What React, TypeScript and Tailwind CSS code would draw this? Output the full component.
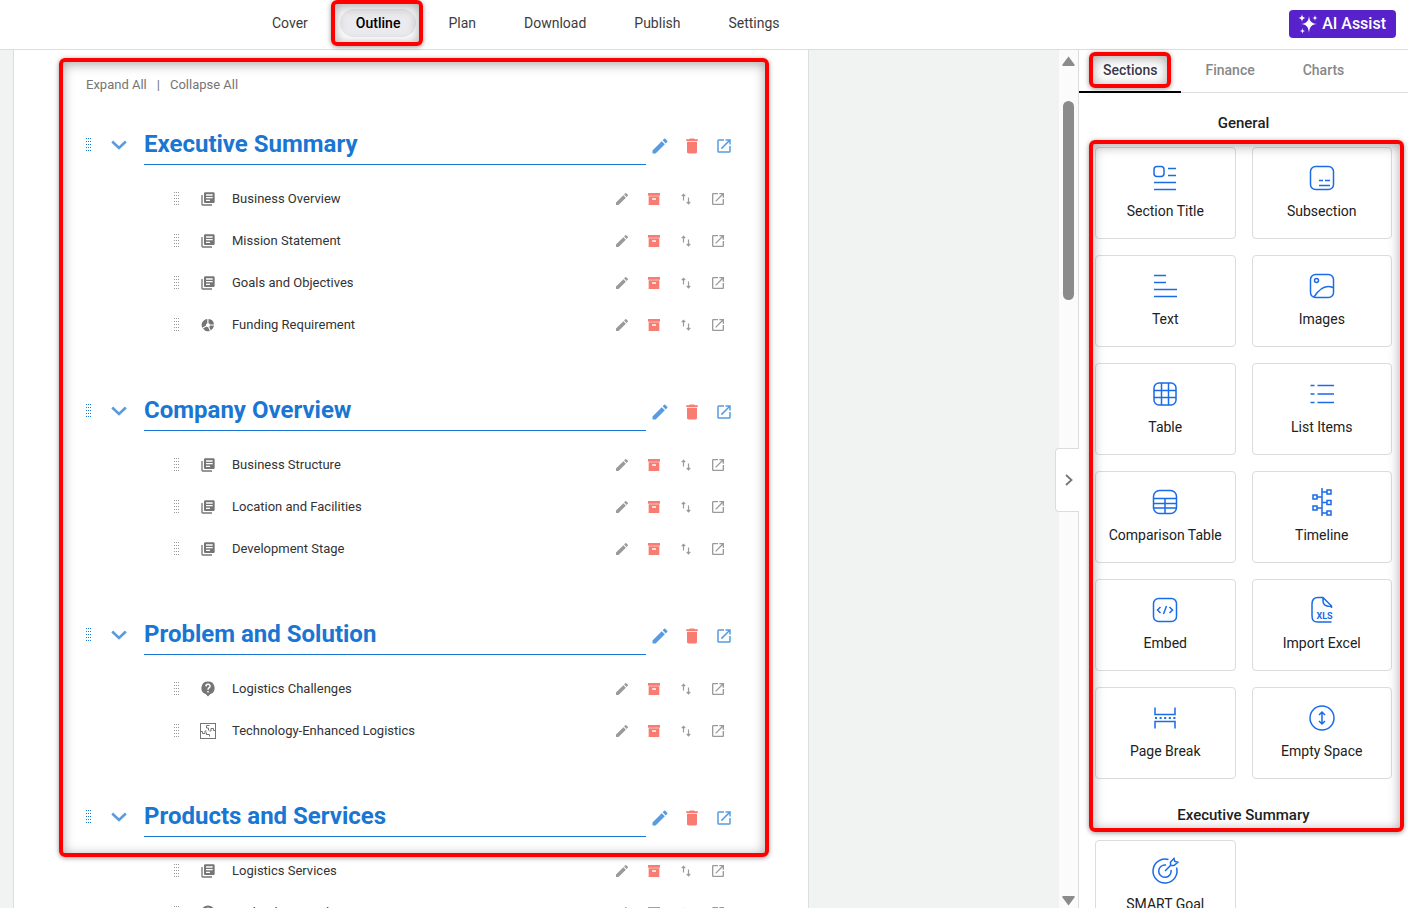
import type { ReactNode } from "react";
import clsx from "clsx";
import { MdDelete, MdEdit, MdLibraryBooks, MdOpenInNew } from "react-icons/md";

type ItemIcon = "doc" | "pie" | "question" | "puzzle";

const navItems = ["Cover", "Outline", "Plan", "Download", "Publish", "Settings"];
const tabs = ["Sections", "Finance", "Charts"];

const sections: { title: string; items: { label: string; icon: ItemIcon }[] }[] = [
  {
    title: "Executive Summary",
    items: [
      { label: "Business Overview", icon: "doc" },
      { label: "Mission Statement", icon: "doc" },
      { label: "Goals and Objectives", icon: "doc" },
      { label: "Funding Requirement", icon: "pie" },
    ],
  },
  {
    title: "Company Overview",
    items: [
      { label: "Business Structure", icon: "doc" },
      { label: "Location and Facilities", icon: "doc" },
      { label: "Development Stage", icon: "doc" },
    ],
  },
  {
    title: "Problem and Solution",
    items: [
      { label: "Logistics Challenges", icon: "question" },
      { label: "Technology-Enhanced Logistics", icon: "puzzle" },
    ],
  },
  {
    title: "Products and Services",
    items: [
      { label: "Logistics Services", icon: "doc" },
      { label: "Technology Products", icon: "question" },
    ],
  },
];

function DragHandle() {
  return (
    <svg width="6" height="14" viewBox="0 0 6 14" fill="currentColor" shapeRendering="crispEdges">
      {[0, 3, 6, 9, 12].map((y) =>
        [0, 2, 4].map((x) => <rect key={`${x}-${y}`} x={x} y={y} width="1" height="1" />)
      )}
    </svg>
  );
}

function ArchiveIcon() {
  return (
    <svg width="16" height="16" viewBox="0 0 24 24" fill="currentColor">
      <path d="M3 3h18v4H3V3m1 5h16v13H4V8m5.5 3a.5.5 0 0 0-.5.5V13h6v-1.5a.5.5 0 0 0-.5-.5h-5Z" />
    </svg>
  );
}

function SwapIcon() {
  return (
    <svg width="12" height="14" viewBox="0 0 12 14" fill="none" stroke="currentColor" strokeWidth="1.2">
      <path d="M3.500 8.500V2.500M1.700 4.200l1.800-1.900 1.800 1.900M8.500 5.500v6M6.700 9.900l1.800 1.900 1.800-1.900" />
    </svg>
  );
}

function RowIcon({ icon }: { icon: ItemIcon }) {
  if (icon === "pie") {
    return (
      <svg width="14" height="14" viewBox="0 0 14 14" fill="currentColor">
        <path d="M6.300 1v4.200A2 2 0 0 0 5 7.500L1.300 9.700A6 6 0 0 1 6.300 1Z" />
        <path d="M7.500 1A6 6 0 0 1 13 6.500H9A2 2 0 0 0 7.500 5.200Z" />
        <path d="M13 7.600A6 6 0 0 1 9.800 12.400L8.200 8.800A2 2 0 0 0 9 7.600Z" />
        <path d="M8.800 12.900A6 6 0 0 1 2 10.600L5.500 8.500A2 2 0 0 0 7.200 9.200Z" />
      </svg>
    );
  }
  if (icon === "question") {
    return (
      <svg width="14" height="16" viewBox="0 0 14 16">
        <path d="M7 .5a6.500 6.500 0 0 1 2.300 12.600L7 15.600l-2.300-2.500A6.500 6.500 0 0 1 7 .5Z" fill="currentColor" />
        <path d="M4.900 5.400C5 2.600 9.200 2.700 9.100 5.200 9 6.700 7 6.700 7 8.800M7 9.900v1.500" fill="none" stroke="white" strokeWidth="1.500" />
      </svg>
    );
  }
  if (icon === "puzzle") {
    return (
      <svg width="16" height="16" viewBox="0 0 16 16" fill="none" stroke="currentColor" strokeWidth="1">
        <rect x=".5" y=".5" width="15" height="15" />
        <path d="M9.500 2.500H6.500v2.500h2v2.500M9.500 13.500v-2h-3v-2M1 8.500h1.500v2h2.500v-2.500h1.500M15 7.500h-1.500v-2H11V8H9.500" />
      </svg>
    );
  }
  return <MdLibraryBooks size={16} />;
}

function IconButton({ label, className, children }: { label: string; className?: string; children: ReactNode }) {
  return (
    <button type="button" aria-label={label} className={clsx("flex w-8 items-center justify-center", className)}>
      {children}
    </button>
  );
}

function OutlineSection({ title, items }: (typeof sections)[number]) {
  return (
    <section className="mb-[45px]">
      <div className="flex h-10 items-center">
        <span className="w-[22px] text-[#1976d2]">
          <DragHandle />
        </span>
        <button type="button" aria-label={`Collapse ${title}`} className="mr-[15px] flex w-[21px] justify-center text-[#5a9be0]">
          <svg width="16" height="10" viewBox="0 0 16 10" fill="none" stroke="currentColor" strokeWidth="2.600">
            <path d="m1.200 1.500 6.800 6.500 6.800-6.500" />
          </svg>
        </button>
        <h2 className="flex h-10 flex-1 items-center border-b border-[#1976d2] pb-0.5 text-2xl font-bold text-[#1976d2]">
          {title}
        </h2>
        <div className="-mr-0.5 flex pt-px">
          <IconButton label={`Edit ${title}`} className="-ml-0.5 text-[#5a9be0]">
            <MdEdit size={20} />
          </IconButton>
          <IconButton label={`Delete ${title}`} className="text-[#f87c72]">
            <MdDelete size={20} />
          </IconButton>
          <IconButton label={`Open ${title}`} className="text-[#5a9be0]">
            <MdOpenInNew size={18} />
          </IconButton>
        </div>
      </div>
      <ul className="mt-[13px] pl-[88px]">
        {items.map((item) => (
          <li key={item.label} className="flex h-[42px] items-center text-[#9a9a9a]">
            <span className="w-[26px]">
              <DragHandle />
            </span>
            <span className="mr-4 flex w-4 justify-center text-[#757575]">
              <RowIcon icon={item.icon} />
            </span>
            <span className="flex-1 text-[13px] text-[#333333]">{item.label}</span>
            <div className="mr-1 flex">
              <IconButton label={`Edit ${item.label}`}>
                <MdEdit size={16} />
              </IconButton>
              <IconButton label={`Archive ${item.label}`} className="text-[#f87c72]">
                <ArchiveIcon />
              </IconButton>
              <IconButton label={`Move ${item.label}`}>
                <SwapIcon />
              </IconButton>
              <IconButton label={`Open ${item.label}`}>
                <MdOpenInNew size={16} />
              </IconButton>
            </div>
          </li>
        ))}
      </ul>
    </section>
  );
}

const blocks: { label: string; art: ReactNode }[] = [
  {
    label: "Section Title",
    art: (
      <>
        <rect x="3" y="2.500" width="10" height="10" rx="3" />
        <path d="M17 4.500h8M17 11.500h8M3 18.500h22M3 25.500h22" />
      </>
    ),
  },
  {
    label: "Subsection",
    art: (
      <>
        <rect x="2.500" y="2.500" width="23" height="23" rx="5" />
        <path d="M11 16.500h4M17 16.500h5M11 21.500h11" />
      </>
    ),
  },
  { label: "Text", art: <path d="M3 3.500h12M3 10.500h12M3 17.500h23M3 24.500h23" /> },
  {
    label: "Images",
    art: (
      <>
        <rect x="2.500" y="2.500" width="23" height="23" rx="5" />
        <circle cx="8.500" cy="8.500" r="2" />
        <path d="M6 25C11 17 17 12 25 15.500" />
      </>
    ),
  },
  {
    label: "Table",
    art: (
      <>
        <rect x="3" y="3" width="22" height="22" rx="5" />
        <path d="M10.500 3v22M17.500 3v22M3 10.500h22M3 17.500h22" />
      </>
    ),
  },
  {
    label: "List Items",
    art: <path d="M2.500 5.500h4M9.500 5.500H26M2.500 14h4M9.500 14H26M2.500 22.500h4M9.500 22.500H26" />,
  },
  {
    label: "Comparison Table",
    art: (
      <>
        <rect x="2.500" y="2.500" width="23" height="23" rx="6" />
        <path d="M3 10.500h22M3 15.500h22M3 20h22M14 10.500V25" />
      </>
    ),
  },
  {
    label: "Timeline",
    art: (
      <>
        <path d="M14 0v28M14 4h5M14 9H9M14 14.500h5M14 20H9M14 25h5" />
        <path d="M19 2h4v4h-4zM5 7h4v4H5zM19 12.500h4v4h-4zM5 18h4v4H5zM19 23h4v4h-4z" />
      </>
    ),
  },
  {
    label: "Embed",
    art: (
      <>
        <rect x="2.500" y="2.500" width="23" height="23" rx="5" />
        <path d="m9.500 11-3 3 3 3M18.500 11l3 3-3 3M15.500 10l-3 8" />
      </>
    ),
  },
  {
    label: "Import Excel",
    art: (
      <>
        <path d="M23.500 26H10c-5 0-6-2-6-7V8c0-5 2-6.500 6-6.500h5L23.500 10v2M15 2c-.5 6 1 8.500 8.500 8.500" />
        <text x="8.500" y="22.500" fontSize="9" fontWeight="700" fontFamily="Roboto, sans-serif" fill="currentColor" stroke="none">
          XLS
        </text>
      </>
    ),
  },
  {
    label: "Page Break",
    art: (
      <>
        <path d="M4 3.500V10.500h20V3.500M4 24.500V17.500h20V24.500" />
        <path d="M4 14h21" strokeWidth="2" strokeDasharray="2 2.600" />
      </>
    ),
  },
  {
    label: "Empty Space",
    art: (
      <>
        <circle cx="14" cy="14" r="12" />
        <path d="M14 8.500v11M11 11l3-3 3 3M11 17l3 3 3-3" />
      </>
    ),
  },
];

function BlockCard({ label, art }: { label: string; art: ReactNode }) {
  return (
    <button
      type="button"
      className="flex h-[92px] flex-col items-center rounded border border-[#dcdcdc] bg-white pt-4 text-sm text-[#212121]"
    >
      <svg
        width="28"
        height="28"
        viewBox="0 0 28 28"
        fill="none"
        stroke="currentColor"
        strokeWidth="1.500"
        className="mb-[9px] text-[#1a6be8]"
      >
        {art}
      </svg>
      {label}
    </button>
  );
}

function Highlight({ className }: { className: string }) {
  return (
    <div
      className={clsx(
        "pointer-events-none absolute z-10 rounded-md border-4 border-[#ff0000] shadow-[0_1px_5px_rgba(0,0,0,0.4),inset_0_2px_12px_rgba(0,0,0,0.35)]",
        className
      )}
    />
  );
}

function Header() {
  return (
    <header className="flex h-[50px] shrink-0 items-center justify-between border-b border-[#dddddd] bg-white pr-3 pb-0.5 pl-64">
      <nav className="flex gap-4 pb-0.5">
        {navItems.map((item) => {
          const active = item === "Outline";
          return (
            <div key={item} className="relative">
              <a
                href={`#${item.toLowerCase()}`}
                className={clsx(
                  "block rounded-full px-4 py-1 text-sm leading-5",
                  active ? "bg-[#ebebef] font-medium text-black" : "text-[#3c3c3c]"
                )}
              >
                {item}
              </a>
              {active && <Highlight className="-inset-y-[9px] right-[-7px] left-[-9px]" />}
            </div>
          );
        })}
      </nav>
      <button type="button" className="flex h-7 items-center gap-1 rounded bg-[#5721cc] pr-2.5 pl-[9px] font-medium text-white">
        <svg width="20" height="20" viewBox="0 0 20 20" fill="currentColor">
          <path d="M11 2c.7 5.300 2.200 7.300 8 8-5.800.7-7.300 2.700-8 9-.7-6.300-2.200-8.300-8-9 5.800-.7 7.300-2.700 8-8Z" />
          <path d="M4 0c.3 2.700 1 3.600 3.500 4C5 4.400 4.300 5.300 4 8 3.700 5.300 3 4.400.5 4 3 3.600 3.700 2.700 4 0ZM17 1c.2 2 .8 2.700 2.800 3-2 .3-2.600 1-2.800 3-.2-2-.8-2.700-2.800-3 2-.3 2.600-1 2.800-3ZM4.500 14c.2 2 .8 2.700 2.800 3-2 .3-2.600 1-2.800 3-.2-2-.8-2.700-2.800-3 2-.3 2.600-1 2.800-3Z" />
        </svg>
        AI Assist
      </button>
    </header>
  );
}

function ScrollTrack() {
  return (
    <div className="flex w-[19px] shrink-0 flex-col items-center bg-[#fbfbfb] pt-1.5 pb-0.5 text-[#8b8b8b]">
      <svg width="13" height="10" viewBox="0 0 13 10" fill="currentColor">
        <path d="M6.500.5 12.500 8.500a1 1 0 0 1-.8 1.500H1.300a1 1 0 0 1-.8-1.500Z" />
      </svg>
      <div className="mt-[35px] h-[199px] w-[11px] rounded-full bg-[#8b8b8b]" />
      <svg width="13" height="10" viewBox="0 0 13 10" fill="currentColor" className="mt-auto">
        <path d="M6.500 9.500.5 1.500A1 1 0 0 1 1.300 0h10.400a1 1 0 0 1 .8 1.500Z" />
      </svg>
    </div>
  );
}

function Sidebar() {
  return (
    <aside className="relative w-[330px] shrink-0 border-l border-[#dcdcdc] bg-white">
      <button
        type="button"
        aria-label="Hide panel"
        className="absolute top-[398px] -left-6 flex h-16 w-6 items-center justify-center rounded-l border border-r-0 border-[#dcdcdc] bg-white pl-0.5 text-[#757575]"
      >
        <svg width="8" height="12" viewBox="0 0 8 12" fill="none" stroke="currentColor" strokeWidth="1.800">
          <path d="m1 1 5.500 5L1 11" />
        </svg>
      </button>
      <div className="flex h-[43px] border-b border-[#dddddd]">
        {tabs.map((tab) => (
          <button
            key={tab}
            type="button"
            className={clsx(
              "relative -mb-px border-b-2 px-6 pb-0.5 text-sm font-medium",
              tab === "Sections" ? "border-black text-[#3a3a4a]" : "border-transparent text-[#888888]"
            )}
          >
            {tab}
            {tab === "Sections" && <Highlight className="inset-x-2.5 top-0.5 h-9" />}
          </button>
        ))}
      </div>
      <div className="relative px-4 pt-5">
        <h3 className="text-center text-[15px] leading-5 font-medium text-[#212121]">General</h3>
        <div className="mt-[14px] grid grid-cols-2 gap-4">
          {blocks.map((block) => (
            <BlockCard key={block.label} {...block} />
          ))}
        </div>
        <h3 className="mt-[26px] text-center text-[15px] leading-5 font-medium text-[#212121]">Executive Summary</h3>
        <Highlight className="top-[47px] right-1 left-2.5 h-[692px]" />
        <div className="mt-[15px] grid grid-cols-2 gap-4">
          <BlockCard
            label="SMART Goal"
            art={
              <>
                <path d="M17.500 2.500A12 12 0 1 0 25.500 10.500" />
                <path d="M15 8A6.200 6.200 0 1 0 20 13M14 14l6-6M19.500 8.500V5l3.500-3.500.8 3 3 .8L23 8.500Z" />
              </>
            }
          />
        </div>
      </div>
    </aside>
  );
}

export default function App() {
  return (
    <div className="flex h-screen flex-col overflow-hidden bg-[#f1f3f3] font-[Roboto,sans-serif]">
      <Header />
      <div className="flex min-h-0 flex-1">
        <main className="min-w-0 flex-1 overflow-hidden pl-[13px]">
          <div className="relative max-w-[796px] border-x border-[#dcdfdf] bg-white pt-[25px] pr-[70px] pl-[72px]">
            <div className="flex items-center gap-2.5 text-[13px] leading-5 text-[#757575]">
              <button type="button">Expand All</button>
              <span>|</span>
              <button type="button">Collapse All</button>
            </div>
            <div className="mt-[30px]">
              {sections.map((section) => (
                <OutlineSection key={section.title} {...section} />
              ))}
            </div>
            <Highlight className="top-2 right-[39px] left-[45px] h-[799px]" />
          </div>
        </main>
        <ScrollTrack />
        <Sidebar />
      </div>
    </div>
  );
}
